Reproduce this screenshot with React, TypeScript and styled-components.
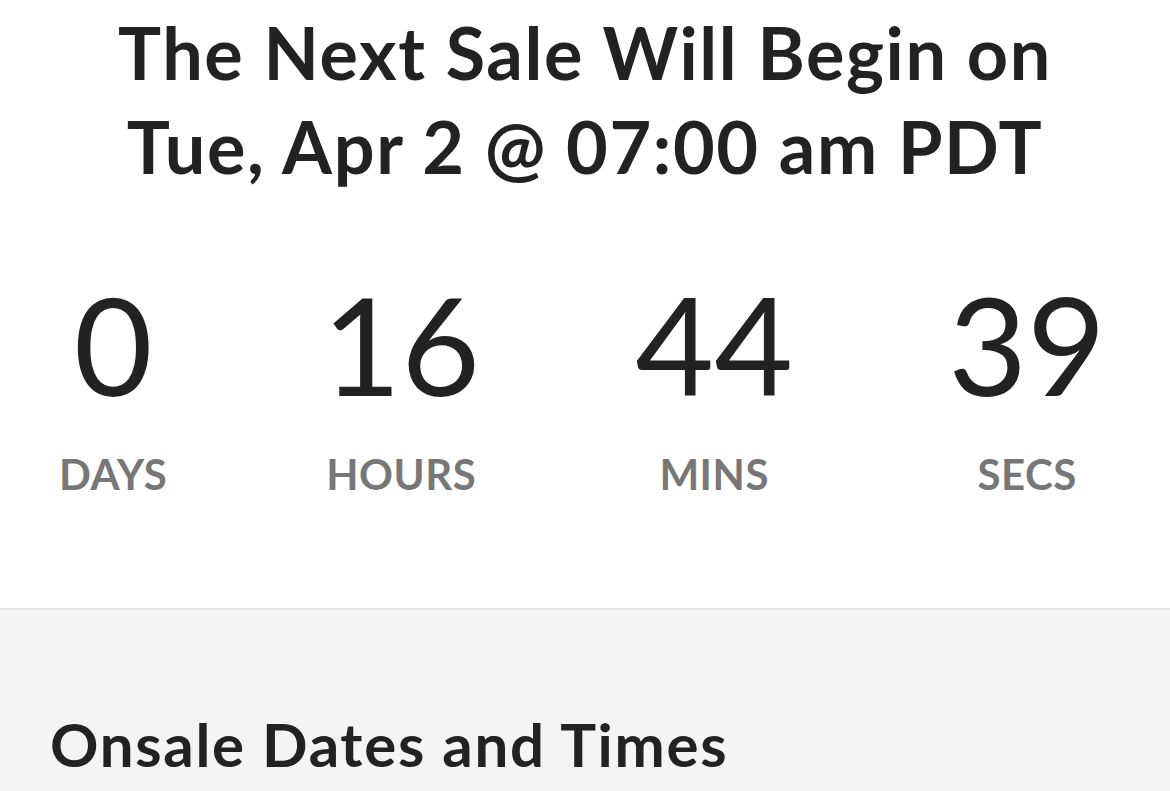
import React from 'react';
import styled, { createGlobalStyle } from 'styled-components';

const GlobalStyle = createGlobalStyle`
  html, body {
    margin: 0;
    padding: 0;
    background: #f4f4f4;
  }
  body {
    font-family: Lato, "Open Sans", sans-serif;
    color: #222;
  }
`;

const Page = styled.div`
  width: 1170px;
  height: 791px;
  overflow: hidden;
  display: flex;
  flex-direction: column;
`;

const Hero = styled.section`
  background: #fff;
  border-bottom: 2px solid #e6e6e6;
  padding: 5px 0 0;
  height: 603px;
  box-sizing: content-box;
`;

const Title = styled.h1`
  margin: 0;
  text-align: center;
  font-size: 72px;
  font-weight: 700;
  line-height: 94px;
  letter-spacing: 1.6px;
  color: #222;
`;

const Countdown = styled.div`
  display: flex;
  justify-content: space-between;
  padding: 0 64px 0 59px;
  margin-top: 83px;
`;

const Unit = styled.div`
  display: flex;
  flex-direction: column;
  align-items: center;
`;

const Value = styled.div`
  font-size: 136px;
  font-weight: 400;
  line-height: 136px;
  color: #222;
`;

const Label = styled.div`
  margin-top: 41px;
  font-size: 42px;
  font-weight: 700;
  line-height: 42px;
  letter-spacing: 0.5px;
  color: #777;
`;

const Schedule = styled.section`
  flex: 1;
  background: #f4f4f4;
  padding: 104px 50px 0;
`;

const SectionTitle = styled.h2`
  margin: 0;
  font-size: 60px;
  font-weight: 700;
  line-height: 60px;
  letter-spacing: 1.7px;
  color: #222;
`;

const units = [
  { value: '0', label: 'DAYS' },
  { value: '16', label: 'HOURS' },
  { value: '44', label: 'MINS' },
  { value: '39', label: 'SECS' },
];

const App: React.FC = () => (
  <Page>
    <GlobalStyle />
    <Hero>
      <Title>
        The Next Sale Will Begin on
        <br />
        Tue, Apr 2 @ 07:00 am PDT
      </Title>
      <Countdown>
        {units.map(u => (
          <Unit key={u.label}>
            <Value>{u.value}</Value>
            <Label>{u.label}</Label>
          </Unit>
        ))}
      </Countdown>
    </Hero>
    <Schedule>
      <SectionTitle>Onsale Dates and Times</SectionTitle>
    </Schedule>
  </Page>
);

export default App;
